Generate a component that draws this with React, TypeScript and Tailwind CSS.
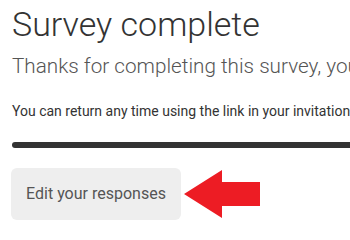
import React from "react";

const ArrowLeft = () => (
  <svg width="76" height="48" viewBox="0 0 76 48" className="ml-[3px] shrink-0">
    <polygon points="0,24 38,0 38,12 76,12 76,36 38,36 38,48" fill="#ed1c24" />
  </svg>
);

const App = () => {
  return (
    <div
      className="w-[350px] h-[232px] overflow-hidden bg-white whitespace-nowrap pl-3"
      style={{ fontFamily: "Roboto, 'Liberation Sans', sans-serif" }}
    >
      {/* heading */}
      <h1 className="pt-[4px] text-[34px] leading-[40px] font-light text-[#333333]">
        Survey complete
      </h1>
      <p className="mt-[10px] text-[20.7px] leading-[25px] font-light text-[#555555]">
        Thanks for completing this survey, your responses have been saved.
      </p>
      <p className="mt-[22px] text-[14px] leading-[20px] text-[#333333]">
        You can return any time using the link in your invitation
      </p>

      {/* progress bar */}
      <div className="mt-[21px] h-[6px] w-[400px] rounded-l-full bg-[#333333]" />

      {/* actions */}
      <div className="mt-5 -ml-px flex items-center">
        <button className="h-[52px] w-[170px] rounded-md bg-[#eeeeee] text-[16px] text-[#555555]">
          Edit your responses
        </button>
        <ArrowLeft />
      </div>
    </div>
  );
};

export default App;
